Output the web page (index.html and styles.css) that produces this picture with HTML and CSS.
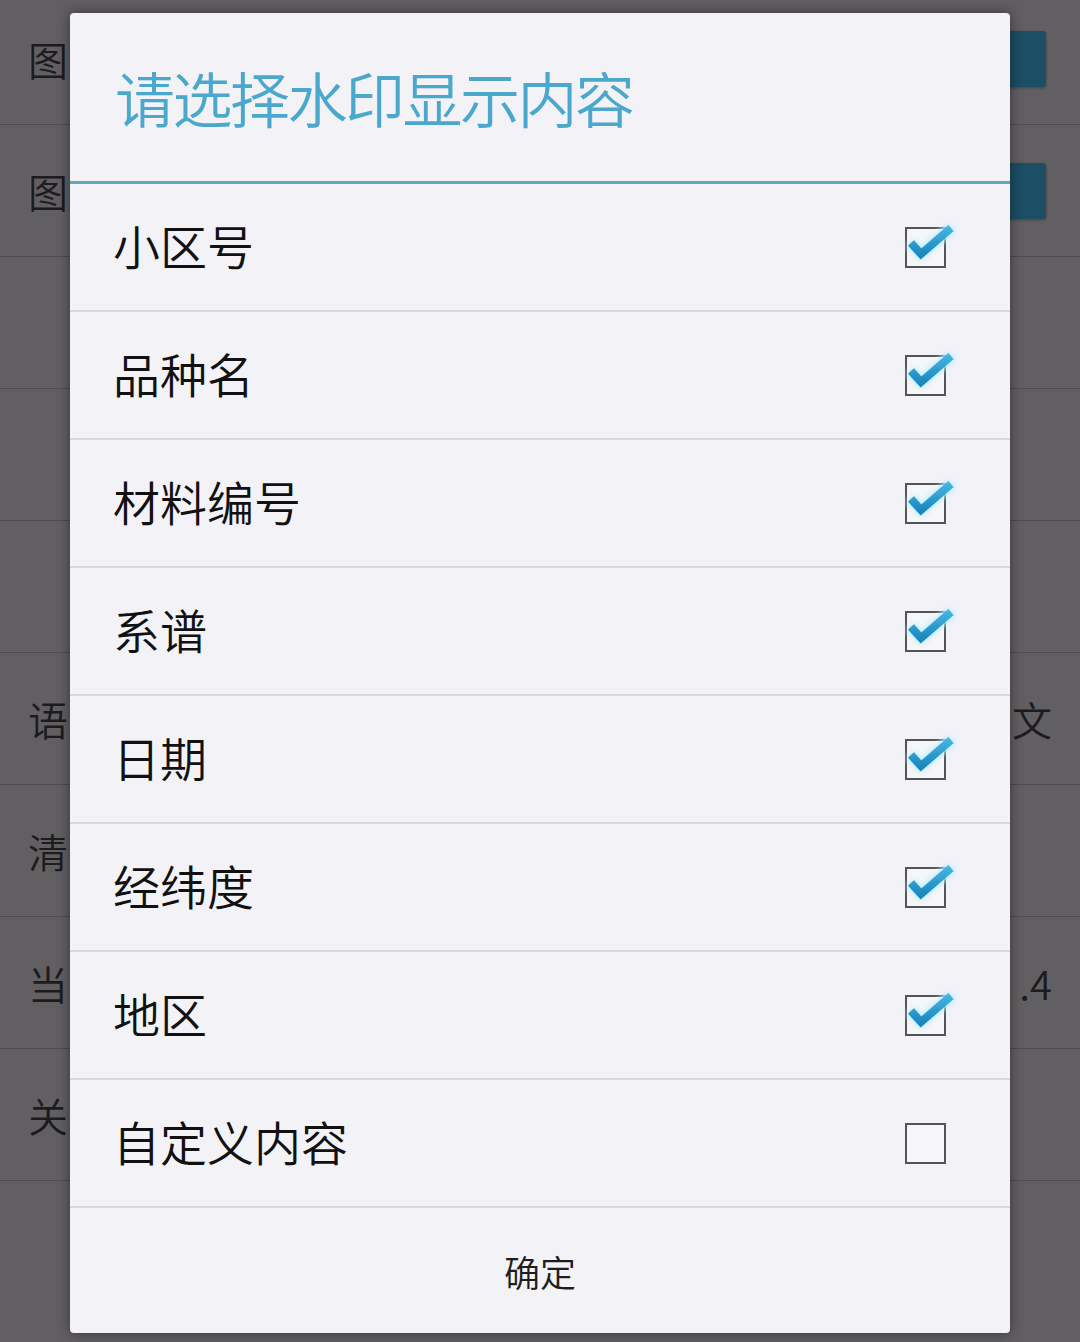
FILE: index.html
```html
<!DOCTYPE html>
<html lang="zh-CN">
<head>
<meta charset="utf-8">
<title>请选择水印显示内容</title>
<link rel="stylesheet" href="styles.css">
</head>
<body>
<div class="screen">
  <div class="bg-list">
    <div class="bg-row"><span class="bg-label">图</span><span class="bg-btn"></span></div>
    <div class="bg-row"><span class="bg-label">图</span><span class="bg-btn"></span></div>
    <div class="bg-row"><span class="bg-label"></span></div>
    <div class="bg-row"><span class="bg-label"></span></div>
    <div class="bg-row"><span class="bg-label"></span></div>
    <div class="bg-row"><span class="bg-label">语</span><span class="bg-value">文</span></div>
    <div class="bg-row"><span class="bg-label">清</span></div>
    <div class="bg-row"><span class="bg-label">当</span><span class="bg-value">.4</span></div>
    <div class="bg-row"><span class="bg-label">关</span></div>
    <div class="bg-row"><span class="bg-label"></span></div>
  </div>

  <div class="dialog">
    <div class="dialog-title">请选择水印显示内容</div>
    <div class="options">
      <div class="option"><span class="option-text">小区号</span><span class="checkbox checked"><svg class="tick" viewBox="0 0 41 41" width="41" height="41"><defs><linearGradient id="g1" x1="0" y1="0" x2="0" y2="28" gradientUnits="userSpaceOnUse"><stop offset="0" stop-color="#45b6e4"/><stop offset="1" stop-color="#1c86bd"/></linearGradient></defs><path d="M6 16 L16 27 L46 1" fill="none" stroke="url(#g1)" stroke-width="8"/></svg></span></div>
      <div class="option"><span class="option-text">品种名</span><span class="checkbox checked"><svg class="tick" viewBox="0 0 41 41" width="41" height="41"><path d="M6 16 L16 27 L46 1" fill="none" stroke="url(#g1)" stroke-width="8"/></svg></span></div>
      <div class="option"><span class="option-text">材料编号</span><span class="checkbox checked"><svg class="tick" viewBox="0 0 41 41" width="41" height="41"><path d="M6 16 L16 27 L46 1" fill="none" stroke="url(#g1)" stroke-width="8"/></svg></span></div>
      <div class="option"><span class="option-text">系谱</span><span class="checkbox checked"><svg class="tick" viewBox="0 0 41 41" width="41" height="41"><path d="M6 16 L16 27 L46 1" fill="none" stroke="url(#g1)" stroke-width="8"/></svg></span></div>
      <div class="option"><span class="option-text">日期</span><span class="checkbox checked"><svg class="tick" viewBox="0 0 41 41" width="41" height="41"><path d="M6 16 L16 27 L46 1" fill="none" stroke="url(#g1)" stroke-width="8"/></svg></span></div>
      <div class="option"><span class="option-text">经纬度</span><span class="checkbox checked"><svg class="tick" viewBox="0 0 41 41" width="41" height="41"><path d="M6 16 L16 27 L46 1" fill="none" stroke="url(#g1)" stroke-width="8"/></svg></span></div>
      <div class="option"><span class="option-text">地区</span><span class="checkbox checked"><svg class="tick" viewBox="0 0 41 41" width="41" height="41"><path d="M6 16 L16 27 L46 1" fill="none" stroke="url(#g1)" stroke-width="8"/></svg></span></div>
      <div class="option"><span class="option-text">自定义内容</span><span class="checkbox"></span></div>
    </div>
    <div class="dialog-actions"><span class="confirm">确定</span></div>
  </div>
</div>
</body>
</html>
```

FILE: styles.css
```css
html, body {
  margin: 0;
  padding: 0;
}
body {
  width: 1080px;
  height: 1342px;
  overflow: hidden;
  background: #625f63;
  font-family: "Noto Sans CJK SC", "Noto Sans", sans-serif;
}
.screen {
  position: relative;
  width: 1080px;
  height: 1342px;
  overflow: hidden;
}
.bg-list {
  margin-top: -7px;
  display: flex;
  flex-direction: column;
}
.bg-row {
  height: 131px;
  border-bottom: 1px solid #4f4c50;
  display: flex;
  align-items: center;
  justify-content: space-between;
  padding: 0 28px;
  box-sizing: content-box;
}
.bg-row:last-child {
  border-bottom: none;
}
.bg-label {
  font-size: 40px;
  font-weight: 350;
  color: #1c1b1d;
  white-space: nowrap;
}
.bg-btn {
  width: 130px;
  height: 56px;
  background: #1c4e64;
  border-radius: 3px;
  margin-right: 6px;
  box-shadow: 0 1px 3px rgba(0,0,0,0.3);
}
.bg-value {
  font-size: 40px;
  font-weight: 350;
  color: #1c1b1d;
  white-space: nowrap;
}

.dialog {
  position: absolute;
  left: 70px;
  top: 13px;
  width: 940px;
  height: 1320px;
  background: #f3f2f7;
  border-radius: 4px;
  box-shadow: 0 0 14px rgba(0,0,0,0.45);
  display: flex;
  flex-direction: column;
  overflow: hidden;
}
.dialog-title {
  height: 171px;
  box-sizing: border-box;
  padding: 0 0 2px 45px;
  display: flex;
  align-items: center;
  font-size: 60px;
  font-weight: 350;
  letter-spacing: -2.5px;
  color: #4aa8cc;
  border-bottom: 3px solid #62a9bd;
  flex: none;
}
.options {
  display: flex;
  flex-direction: column;
}
.option {
  height: 126px;
  border-bottom: 2px solid #d9d8de;
  display: flex;
  align-items: center;
  justify-content: space-between;
  padding: 0 64px 0 43px;
  box-sizing: content-box;
}
.option-text {
  font-size: 47px;
  font-weight: 350;
  letter-spacing: 0;
  color: #111;
  padding-bottom: 5px;
}
.checkbox {
  position: relative;
  width: 41px;
  height: 41px;
  box-sizing: border-box;
  border: 2px solid #555457;
  background: #f6f6f8;
}
.tick {
  position: absolute;
  left: -2px;
  top: -2px;
  overflow: visible;
  filter: drop-shadow(0 0 2px #a8ecff) drop-shadow(0 0 3px #c8f3ff);
}
.dialog-actions {
  flex: 1;
  display: flex;
  align-items: center;
  justify-content: center;
}
.confirm {
  font-size: 36px;
  font-weight: 350;
  color: #1e1e1e;
}
```
